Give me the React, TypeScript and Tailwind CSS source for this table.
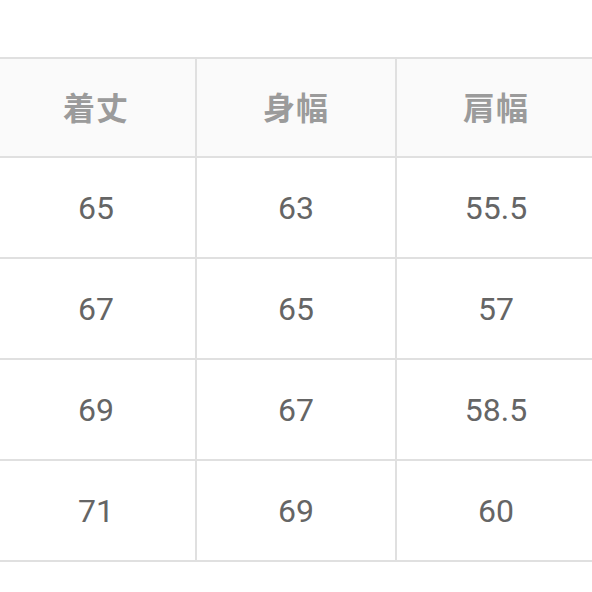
import React from "react";

const headers = ["着丈", "身幅", "肩幅"];
const rows = [
  ["65", "63", "55.5"],
  ["67", "65", "57"],
  ["69", "67", "58.5"],
  ["71", "69", "60"],
];

export default function App() {
  return (
    <div className="w-[592px] h-[592px] bg-white overflow-hidden pt-[57px]">
      <div className="ml-[-3px] w-[600px] grid grid-cols-[198px_198px_198px] gap-[2px] bg-[#e0e0e0] py-[2px] pr-[2px]">
        {headers.map((h) => (
          <div
            key={h}
            className="h-[97px] bg-[#fafafa] flex items-center justify-center pb-[4px] text-[32px] font-bold text-[#9b9b9b] tracking-[1px]"
            style={{ fontFamily: '"Noto Sans CJK JP", "Noto Sans", sans-serif' }}
          >
            {h}
          </div>
        ))}
        {rows.flat().map((v, i) => (
          <div
            key={i}
            className="h-[99px] bg-white flex items-center justify-center text-[32px] text-[#656565]"
            style={{ fontFamily: 'Roboto, "Noto Sans", sans-serif' }}
          >
            {v}
          </div>
        ))}
      </div>
    </div>
  );
}
